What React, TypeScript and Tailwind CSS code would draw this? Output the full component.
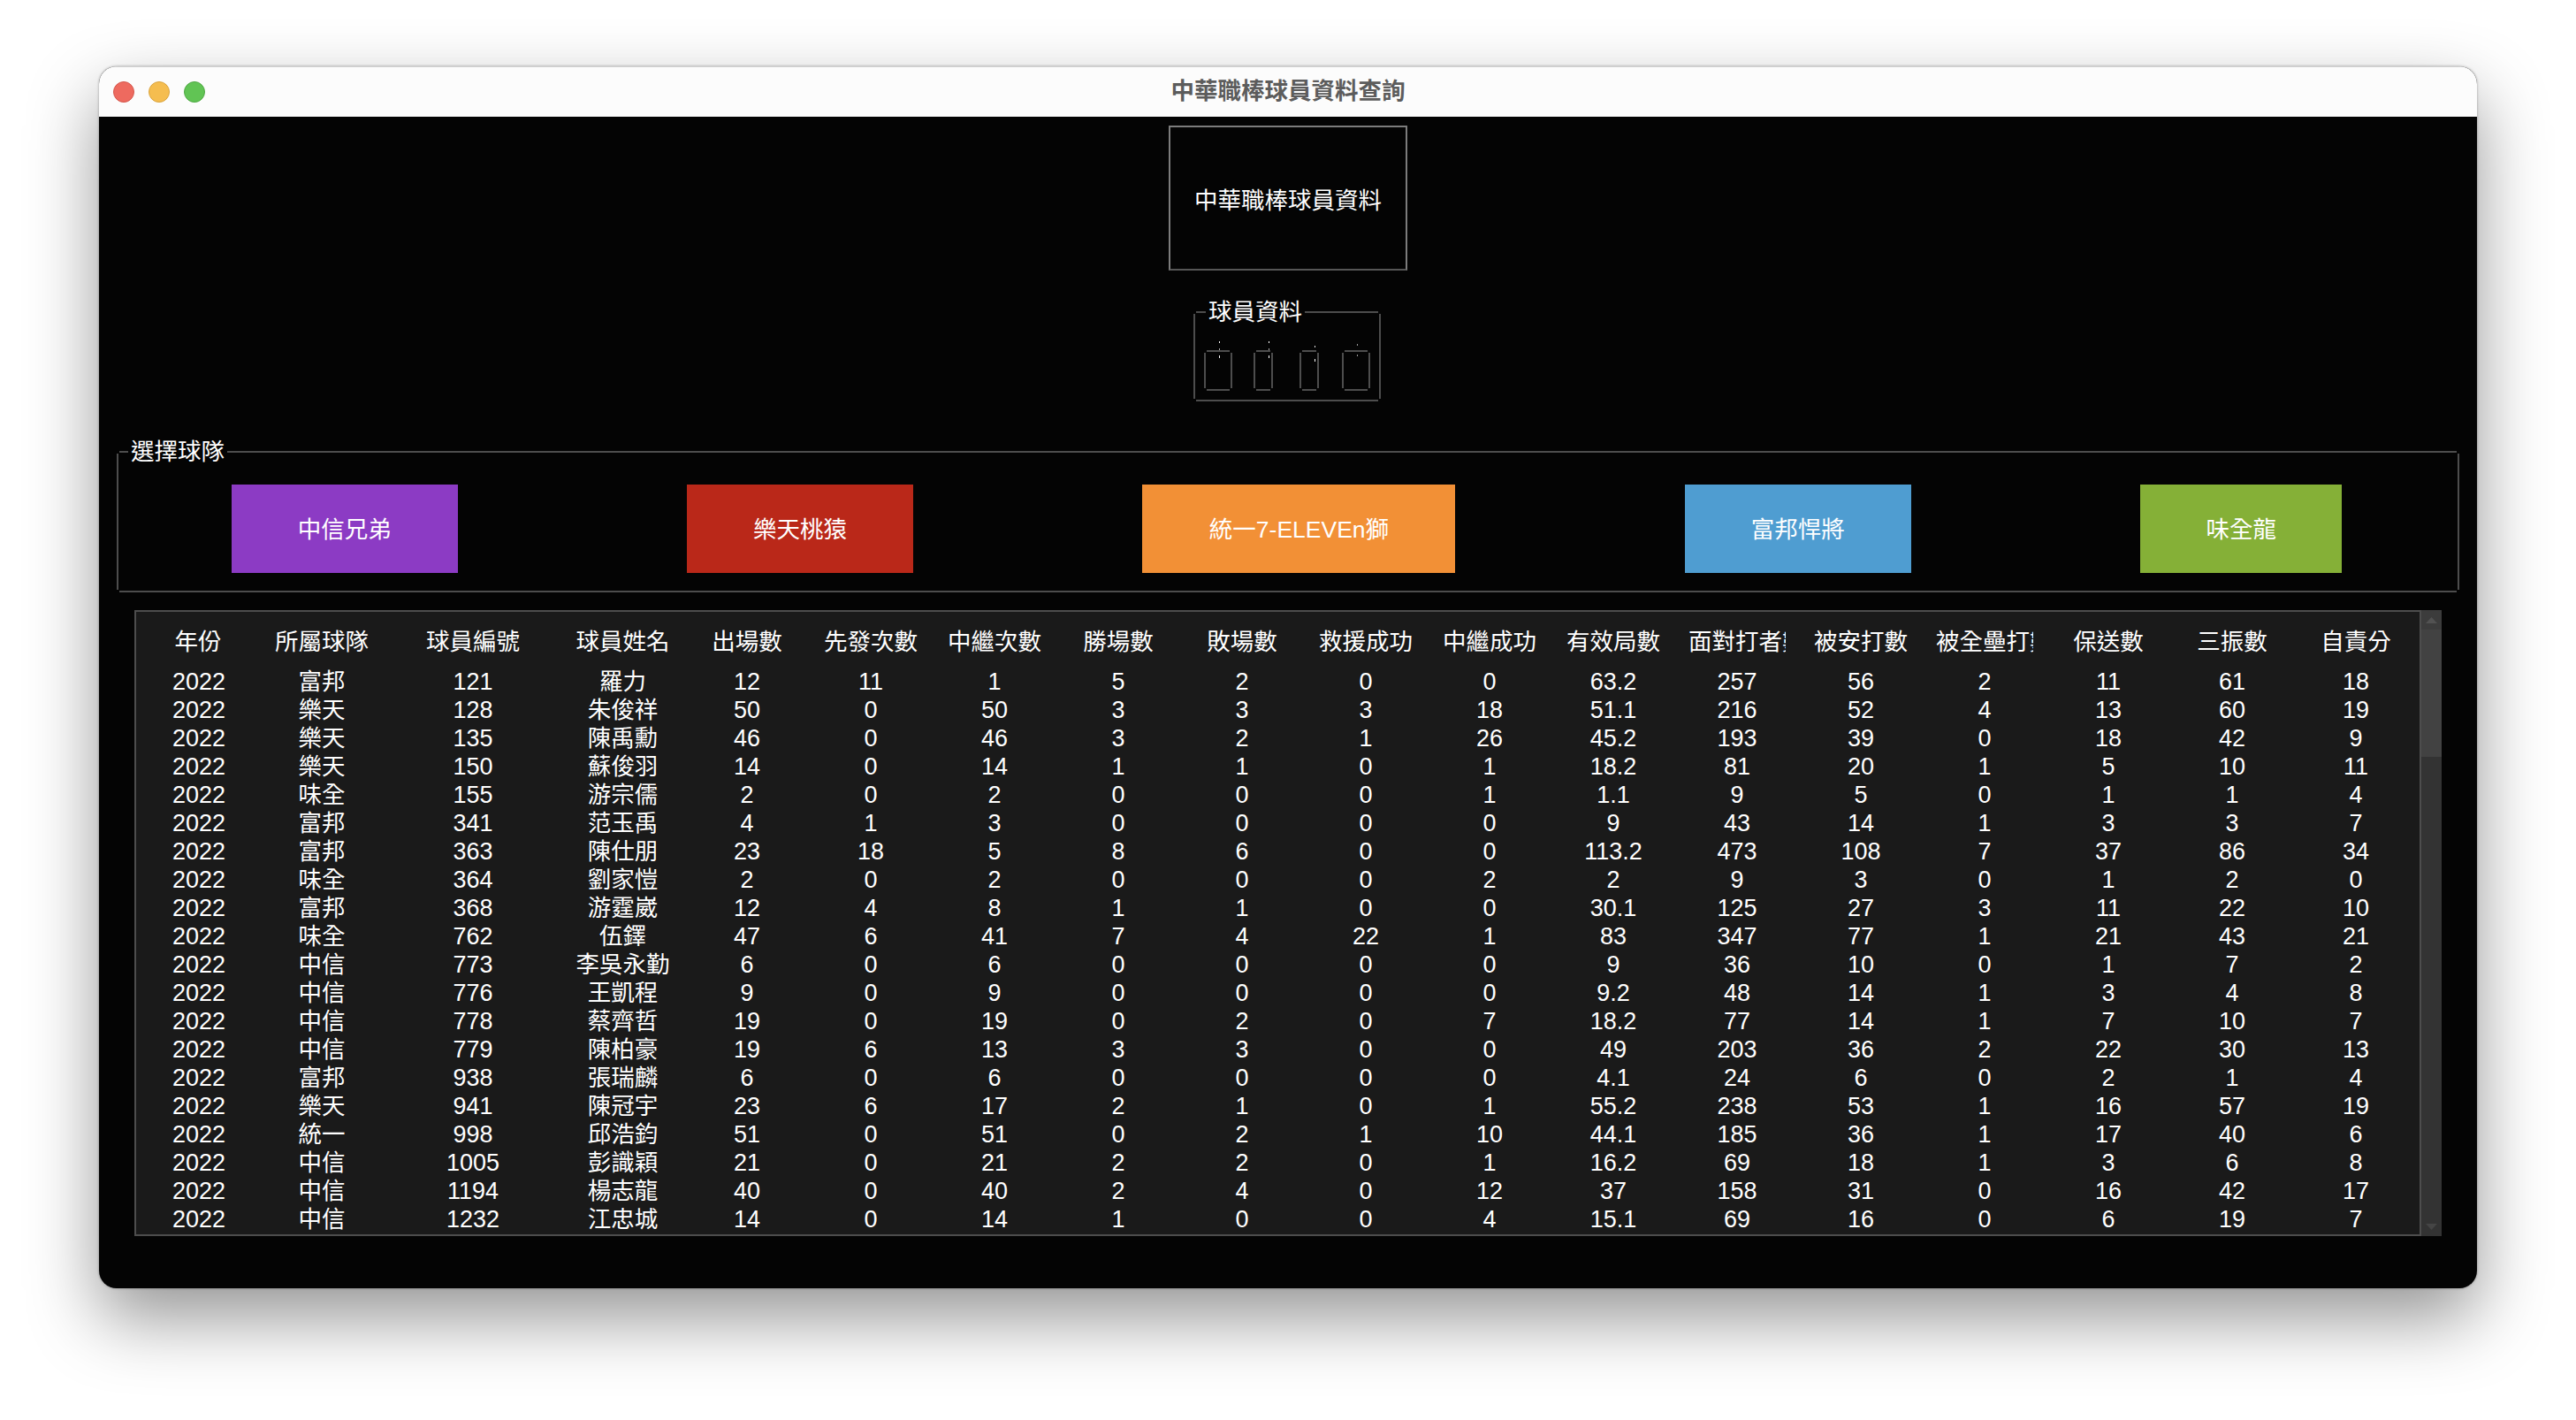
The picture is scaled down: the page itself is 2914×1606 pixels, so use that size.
const headers = [
  "年份", "所屬球隊", "球員編號", "球員姓名", "出場數", "先發次數", "中繼次數", "勝場數", "敗場數",
  "救援成功", "中繼成功", "有效局數", "面對打者數", "被安打數", "被全壘打數", "保送數", "三振數", "自責分",
];

const rows: (string | number)[][] = [
  [2022, "富邦", 121, "羅力", 12, 11, 1, 5, 2, 0, 0, 63.2, 257, 56, 2, 11, 61, 18],
  [2022, "樂天", 128, "朱俊祥", 50, 0, 50, 3, 3, 3, 18, 51.1, 216, 52, 4, 13, 60, 19],
  [2022, "樂天", 135, "陳禹勳", 46, 0, 46, 3, 2, 1, 26, 45.2, 193, 39, 0, 18, 42, 9],
  [2022, "樂天", 150, "蘇俊羽", 14, 0, 14, 1, 1, 0, 1, 18.2, 81, 20, 1, 5, 10, 11],
  [2022, "味全", 155, "游宗儒", 2, 0, 2, 0, 0, 0, 1, 1.1, 9, 5, 0, 1, 1, 4],
  [2022, "富邦", 341, "范玉禹", 4, 1, 3, 0, 0, 0, 0, 9, 43, 14, 1, 3, 3, 7],
  [2022, "富邦", 363, "陳仕朋", 23, 18, 5, 8, 6, 0, 0, 113.2, 473, 108, 7, 37, 86, 34],
  [2022, "味全", 364, "劉家愷", 2, 0, 2, 0, 0, 0, 2, 2, 9, 3, 0, 1, 2, 0],
  [2022, "富邦", 368, "游霆崴", 12, 4, 8, 1, 1, 0, 0, 30.1, 125, 27, 3, 11, 22, 10],
  [2022, "味全", 762, "伍鐸", 47, 6, 41, 7, 4, 22, 1, 83, 347, 77, 1, 21, 43, 21],
  [2022, "中信", 773, "李吳永勤", 6, 0, 6, 0, 0, 0, 0, 9, 36, 10, 0, 1, 7, 2],
  [2022, "中信", 776, "王凱程", 9, 0, 9, 0, 0, 0, 0, 9.2, 48, 14, 1, 3, 4, 8],
  [2022, "中信", 778, "蔡齊哲", 19, 0, 19, 0, 2, 0, 7, 18.2, 77, 14, 1, 7, 10, 7],
  [2022, "中信", 779, "陳柏豪", 19, 6, 13, 3, 3, 0, 0, 49, 203, 36, 2, 22, 30, 13],
  [2022, "富邦", 938, "張瑞麟", 6, 0, 6, 0, 0, 0, 0, 4.1, 24, 6, 0, 2, 1, 4],
  [2022, "樂天", 941, "陳冠宇", 23, 6, 17, 2, 1, 0, 1, 55.2, 238, 53, 1, 16, 57, 19],
  [2022, "統一", 998, "邱浩鈞", 51, 0, 51, 0, 2, 1, 10, 44.1, 185, 36, 1, 17, 40, 6],
  [2022, "中信", 1005, "彭識穎", 21, 0, 21, 2, 2, 0, 1, 16.2, 69, 18, 1, 3, 6, 8],
  [2022, "中信", 1194, "楊志龍", 40, 0, 40, 2, 4, 0, 12, 37, 158, 31, 0, 16, 42, 17],
  [2022, "中信", 1232, "江忠城", 14, 0, 14, 1, 0, 0, 4, 15.1, 69, 16, 0, 6, 19, 7],
];

const teams = [
  { name: "中信兄弟", className: "w-[256px] bg-[#8c3bc4]" },
  { name: "樂天桃猿", className: "w-[256px] bg-[#ba2819]" },
  { name: "統一7-ELEVEn獅", className: "w-[354px] bg-[#f29036]" },
  { name: "富邦悍將", className: "w-[256px] bg-[#4f9dd1]" },
  { name: "味全龍", className: "w-[228px] bg-[#85b037]" },
];

// Group box outline: four separate lines, the corners stay open
function FrameLines() {
  return (
    <>
      <span className="absolute top-0 left-[3px] right-[3px] h-[2px] bg-[#4d4d4d]" />
      <span className="absolute bottom-0 left-[3px] right-[3px] h-[2px] bg-[#4d4d4d]" />
      <span className="absolute top-[3px] bottom-[3px] left-0 w-[2px] bg-[#4d4d4d]" />
      <span className="absolute top-[3px] bottom-[3px] right-0 w-[2px] bg-[#4d4d4d]" />
    </>
  );
}

function EmptyLabel({
  width,
  dotX,
  dots,
  className,
}: {
  width: number;
  dotX: number;
  dots: [number, number, string][];
  className: string;
}) {
  return (
    <svg width={width} height={56} viewBox={`0 0 ${width} 56`} className={className}>
      <rect x={3} y={10} width={width - 6} height={2} fill="#4d4d4d" />
      <rect x={3} y={54} width={width - 6} height={2} fill="#4d4d4d" />
      <rect x={0} y={13} width={2} height={40} fill="#4d4d4d" />
      <rect x={width - 2} y={13} width={2} height={40} fill="#4d4d4d" />
      {dots.map(([y, h, color]) => (
        <rect key={y} x={dotX} y={y} width={1} height={h} fill={color} />
      ))}
    </svg>
  );
}

export default function App() {
  return (
    <div className="min-h-screen bg-white pt-[75px] pl-[112px] font-['Liberation_Sans','Noto_Sans_CJK_TC',sans-serif]">
      <div className="w-[2690px] h-[1382px] flex flex-col overflow-hidden rounded-[20px] bg-[#040404] shadow-[0_34px_80px_rgba(0,0,0,0.42),0_0_3px_rgba(0,0,0,0.35)]">
        <div className="h-[57px] shrink-0 grid grid-cols-[1fr_auto_1fr] items-center bg-[#fcfcfc] border-t border-[#cfcfcf]">
          <div className="flex gap-4 pl-4">
            <span className="w-6 h-6 rounded-full bg-[#ee6a5f] border border-[#d4574d]" />
            <span className="w-6 h-6 rounded-full bg-[#f5bd4f] border border-[#d9a43f]" />
            <span className="w-6 h-6 rounded-full bg-[#61c454] border border-[#50a845]" />
          </div>
          <div className="text-[26.500px] font-bold text-[#5c5c5c]">中華職棒球員資料查詢</div>
        </div>

        <div className="flex-1 flex flex-col text-white text-[26px] leading-[26px]">
          <div className="mt-[10px] mx-auto w-[270px] h-[164px] pt-[5px] flex items-center justify-center border-2 border-[#7c7c7c] border-b-[#565656] text-[26.500px]">
            中華職棒球員資料
          </div>

          <div className="relative mt-[46px] ml-[1238px] w-[212px] h-[102px] flex pt-[34px] pl-[12px]">
            <FrameLines />
            <span className="absolute left-[14px] -top-[12px] bg-[#040404] px-[3px] text-[26.500px]">球員資料</span>
            <EmptyLabel width={32} dotX={17} dots={[[0, 2, "#ffffff"], [8, 2, "#aaaaaa"], [16, 3, "#ffffff"]]} className="mr-[24px]" />
            <EmptyLabel width={22} dotX={17} dots={[[0, 2, "#ffffff"], [8, 2, "#aaaaaa"], [16, 3, "#ffffff"]]} className="mr-[30px]" />
            <EmptyLabel width={22} dotX={17} dots={[[5, 2, "#dddddd"], [20, 3, "#ffffff"]]} className="mr-[26px]" />
            <EmptyLabel width={32} dotX={17} dots={[[3, 2, "#999999"], [15, 2, "#999999"]]} className="" />
          </div>

          <div className="relative mt-[56px] mx-[20px] h-[160px] pt-[38px] pr-[3px] flex justify-around items-start">
            <FrameLines />
            <span className="absolute left-[13px] -top-[12px] bg-[#040404] px-[3px] text-[26.500px]">選擇球隊</span>
            {teams.map((team) => (
              <button key={team.name} className={`h-[100px] pt-[2px] text-white text-[26.500px] ${team.className}`}>
                {team.name}
              </button>
            ))}
          </div>

          <div className="mt-[20px] ml-[40px] mr-[40px] h-[708px] flex">
            <div className="w-[2587px] border-2 border-[#4d4d4d] bg-[#1a1a1a] overflow-hidden">
              <table className="w-[2581px] table-fixed border-collapse">
                <colgroup>
                  <col className="w-[138px]" />
                  <col className="w-[144px]" />
                  <col className="w-[198px]" />
                  <col className="w-[141px]" />
                  {headers.slice(4).map((h) => (
                    <col key={h} className="w-[140px]" />
                  ))}
                </colgroup>
                <thead>
                  <tr className="h-[63px]">
                    {headers.map((h, i) => (
                      <th key={h} className={`p-0 font-normal ${i === 0 ? "pl-[2px]" : ""}`}>
                        <div className="mx-[15px] pt-[4px] overflow-hidden whitespace-nowrap text-center text-[26.500px] leading-[36px]">
                          {h}
                        </div>
                      </th>
                    ))}
                  </tr>
                </thead>
                <tbody>
                  {rows.map((row) => (
                    <tr key={row[2]} className="h-[32px]">
                      {row.map((value, i) => (
                        <td
                          key={i}
                          className={`p-0 text-center whitespace-nowrap ${i === 0 ? "pl-[4px]" : ""} ${
                            typeof value === "string" ? "text-[26.500px]" : "text-[27px]"
                          }`}
                        >
                          {value}
                        </td>
                      ))}
                    </tr>
                  ))}
                </tbody>
              </table>
            </div>

            <div className="w-[23px] flex flex-col bg-[#333333]">
              <div className="h-[22px] flex items-center justify-center bg-[#3c3c3c]">
                <svg width="13" height="7" viewBox="0 0 13 7">
                  <path d="M6.5 0 13 7H0z" fill="#525252" />
                </svg>
              </div>
              <div className="h-[144px] bg-[#424242]" />
              <div className="flex-1" />
              <div className="h-[22px] flex items-center justify-center">
                <svg width="13" height="7" viewBox="0 0 13 7">
                  <path d="M0 0h13L6.500 7z" fill="#454545" />
                </svg>
              </div>
            </div>
          </div>
        </div>
      </div>
    </div>
  );
}
